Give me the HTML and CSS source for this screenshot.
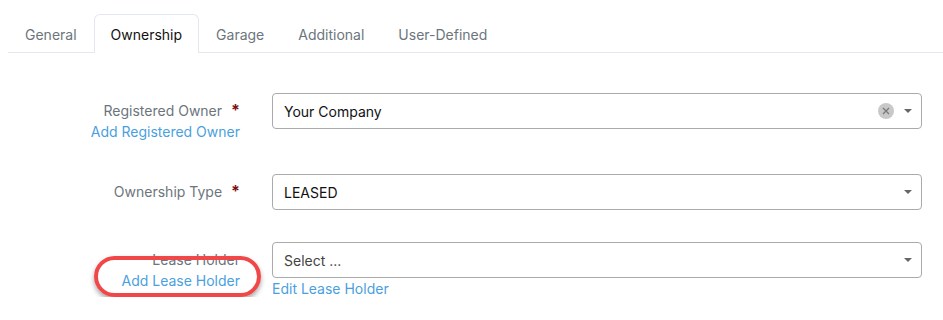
FILE: index.html
```html
<!DOCTYPE html>
<html lang="en">
<head>
    <meta charset="UTF-8" />
    <title>Ownership</title>
    <link rel="stylesheet" href="styles.css">
</head>
<body>

<ul class="tabs">
    <li class="tab">General</li>
    <li class="tab active">Ownership</li>
    <li class="tab">Garage</li>
    <li class="tab">Additional</li>
    <li class="tab">User-Defined</li>
</ul>

<div class="form">
    <div class="row">
        <div class="label-col">
            <div class="label">Registered Owner<span class="req">*</span></div>
            <a class="link">Add Registered Owner</a>
        </div>
        <div class="field-col">
            <div class="select">
                <span class="value">Your Company</span>
                <span class="clear">
                    <svg width="16" height="16" viewBox="0 0 16 16"><circle cx="8" cy="8" r="8" fill="#c8c8c8"/><path d="M5 5L11 11M11 5L5 11" stroke="#7a7a7a" stroke-width="1.4"/></svg>
                </span>
                <span class="caret"></span>
            </div>
        </div>
    </div>

    <div class="row">
        <div class="label-col">
            <div class="label">Ownership Type<span class="req">*</span></div>
        </div>
        <div class="field-col">
            <div class="select">
                <span class="value">LEASED</span>
                <span class="caret"></span>
            </div>
        </div>
    </div>

    <div class="row">
        <div class="label-col">
            <div class="label">Lease Holder</div>
            <a class="link marked">Add Lease Holder</a>
        </div>
        <div class="field-col">
            <div class="select">
                <span class="value placeholder">Select ...</span>
                <span class="caret"></span>
            </div>
            <a class="link">Edit Lease Holder</a>
        </div>
    </div>
</div>

</body>
</html>
```

FILE: styles.css
```css
body {
    margin: 0;
    font-family: 'Inter', 'Liberation Sans', sans-serif;
    font-size: 14px;
    background: #fff;
    color: #212529;
}

.tabs {
    list-style: none;
    display: flex;
    margin: 14px 0 0 8px;
    padding: 0;
    border-bottom: 1px solid #e3e7ee;
}

.tab {
    padding: 0 16px;
    height: 37px;
    line-height: 39px;
    color: #6c757d;
    border: 1px solid transparent;
    border-bottom: none;
    border-radius: 6px 6px 0 0;
    margin-bottom: -1px;
}

.tab.active {
    color: #111;
    background: #fff;
    border-color: #e3e7ee;
    height: 38px;
}

.form {
    padding: 40px 21px 0 8px;
}

.row {
    display: flex;
    gap: 32px;
}

.row:nth-child(2) {
    margin-top: 34px;
}

.row:nth-child(3) {
    margin-top: 32px;
}

.label-col {
    width: 232px;
    text-align: right;
    padding-top: 9px;
}

.label {
    color: #6c757d;
    line-height: 17px;
}

.req {
    color: #7a1010;
    font-weight: bold;
    margin-left: 9px;
    font-size: 16px;
}

.link {
    display: inline-block;
    color: #4a9fe0;
    line-height: 17px;
    margin-top: 4px;
}

.link.marked {
    position: relative;
}

.link.marked::after {
    content: "";
    position: absolute;
    left: -27px;
    right: -21px;
    top: -16px;
    bottom: -8px;
    border: 4px solid #f04848;
    border-radius: 21px;
    box-shadow: 0 3px 5px rgba(0,0,0,0.35);
}

.field-col {
    flex: 1;
}

.field-col .link {
    margin-top: 2px;
}

.select {
    display: flex;
    align-items: center;
    height: 34px;
    border: 1px solid #aaa;
    border-radius: 4px;
    padding: 0 9px 0 11px;
}

.value {
    flex: 1;
    color: #111;
}

.value.placeholder {
    color: #444;
}

.clear {
    display: flex;
    margin-right: 10px;
}

.caret {
    width: 0;
    height: 0;
    border-left: 4px solid transparent;
    border-right: 4px solid transparent;
    border-top: 4px solid #666;
}
```
